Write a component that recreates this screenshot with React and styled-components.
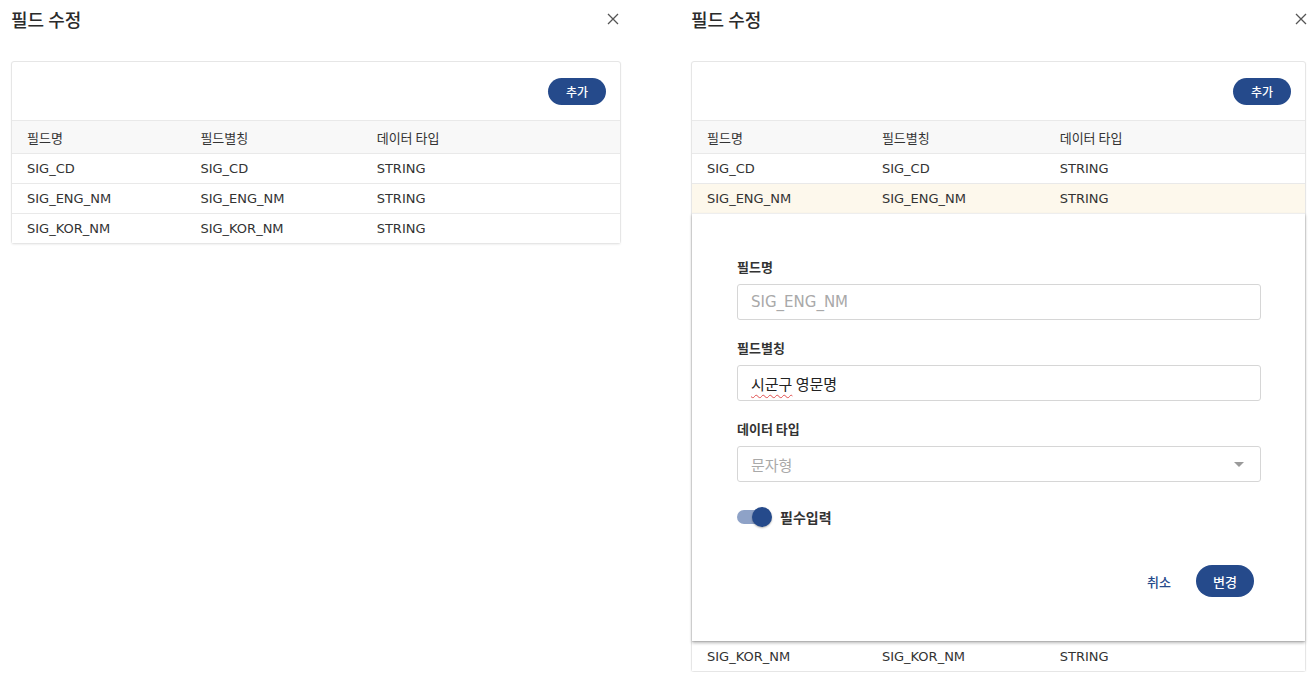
import React from 'react';
import styled, { createGlobalStyle } from 'styled-components';

const GlobalStyle = createGlobalStyle`
  html, body {
    margin: 0;
    padding: 0;
    background: #ffffff;
  }
  body {
    font-family: "DejaVu Sans", "Noto Sans CJK KR", sans-serif;
    color: #333333;
  }
`;

const PRIMARY = '#254a8b';
const KR = '"Noto Sans CJK KR", "DejaVu Sans", sans-serif';
const LATIN = '"DejaVu Sans", "Noto Sans CJK KR", sans-serif';

const rows = [
  { name: 'SIG_CD', alias: 'SIG_CD', type: 'STRING' },
  { name: 'SIG_ENG_NM', alias: 'SIG_ENG_NM', type: 'STRING' },
  { name: 'SIG_KOR_NM', alias: 'SIG_KOR_NM', type: 'STRING' },
];

const Page = styled.div`
  display: flex;
  column-gap: 70px;
  padding-left: 11px;
`;

const Dialog = styled.section`
  width: ${(props) => props.$width}px;
  display: flex;
  flex-direction: column;
`;

const DialogHeader = styled.header`
  display: flex;
  align-items: center;
  justify-content: space-between;
  height: 37px;
  margin-bottom: 24px;
`;

const Title = styled.h2`
  margin: 0;
  font-family: ${KR};
  font-size: 18px;
  font-weight: 500;
  color: #2b2b2b;
`;

const CloseButton = styled.button`
  border: none;
  background: none;
  padding: 0;
  margin-right: ${(props) => props.$offset}px;
  width: 14px;
  height: 14px;
  display: flex;
  align-items: center;
  justify-content: center;
  color: #555;
  cursor: pointer;
`;

const Card = styled.div`
  border: 1px solid #e6e6e6;
  border-radius: 3px;
  box-shadow: 0 1px 2px rgba(0, 0, 0, 0.06);
  background: #fff;
`;

const Toolbar = styled.div`
  height: 58px;
  display: flex;
  align-items: center;
  justify-content: flex-end;
  padding-right: 14px;
`;

const PillButton = styled.button`
  border: none;
  border-radius: 16px;
  background: ${PRIMARY};
  color: #fff;
  font-family: ${KR};
  font-size: ${(props) => (props.$large ? 13 : 12)}px;
  font-weight: 500;
  width: 58px;
  height: ${(props) => (props.$large ? 32 : 27)}px;
  cursor: pointer;
  padding: 0;
`;

const Row = styled.div`
  display: grid;
  grid-template-columns: 30% 30.5% 1fr;
  align-items: center;
  height: ${(props) => (props.$header ? 32 : 29)}px;
  padding: 0 15px;
  border-top: 1px solid #e9e9e9;
  background: ${(props) =>
    props.$header ? '#f8f8f8' : props.$selected ? '#fdf8ec' : '#fff'};
  font-family: ${(props) => (props.$header ? KR : LATIN)};
  font-size: 13px;
  color: #333;
`;

const EditPanel = styled.div`
  position: relative;
  z-index: 1;
  background: #fff;
  padding: 44px 44px 44px 45px;
  box-shadow: 0 2px 3px rgba(0, 0, 0, 0.28);
  border-top: 1px solid #eeeeee;
`;

const Field = styled.div`
  display: flex;
  flex-direction: column;
  row-gap: 8px;
  margin-bottom: 19px;
`;

const Label = styled.label`
  font-family: ${KR};
  font-size: 13px;
  font-weight: 600;
  line-height: 18px;
  color: #333;
`;

const TextBox = styled.div`
  box-sizing: border-box;
  height: 36px;
  border: 1px solid #d6d6d6;
  border-radius: 3px;
  display: flex;
  align-items: center;
  justify-content: space-between;
  padding: 0 16px 0 13px;
  font-family: ${(props) => (props.$korean ? KR : LATIN)};
  font-size: 15px;
  color: ${(props) => (props.$muted ? '#a9a9a9' : '#222')};
`;

const Misspelled = styled.span`
  text-decoration: underline wavy #e05050;
  text-decoration-thickness: 1px;
  text-underline-offset: 4px;
`;

const Caret = styled.span`
  width: 0;
  height: 0;
  border-left: 5px solid transparent;
  border-right: 5px solid transparent;
  border-top: 5px solid #9a9a9a;
`;

const SwitchRow = styled.div`
  display: flex;
  align-items: center;
  column-gap: 9px;
  margin-top: 23px;
  height: 24px;
`;

const Track = styled.span`
  position: relative;
  width: 34px;
  height: 14px;
  border-radius: 7px;
  background: #8ea2c7;
`;

const Thumb = styled.span`
  position: absolute;
  right: -1px;
  top: -3px;
  width: 20px;
  height: 20px;
  border-radius: 50%;
  background: ${PRIMARY};
  box-shadow: 0 1px 2px rgba(0, 0, 0, 0.3);
`;

const SwitchText = styled.span`
  font-family: ${KR};
  font-size: 14px;
  font-weight: 700;
  color: #333;
`;

const Actions = styled.div`
  display: flex;
  justify-content: flex-end;
  align-items: center;
  column-gap: 25px;
  margin-top: 36px;
  padding-right: 7px;
`;

const TextButton = styled.button`
  border: none;
  background: none;
  padding: 0;
  font-family: ${KR};
  font-size: 13px;
  font-weight: 500;
  color: ${PRIMARY};
  cursor: pointer;
`;

const CloseIcon = () => (
  <svg width="12" height="12" viewBox="0 0 12 12">
    <path d="M1 1 L11 11 M11 1 L1 11" stroke="currentColor" strokeWidth="1.3" />
  </svg>
);

const HeaderRow = () => (
  <Row $header>
    <span>필드명</span>
    <span>필드별칭</span>
    <span>데이터 타입</span>
  </Row>
);

const DataRow = ({ row, selected }) => (
  <Row $selected={selected}>
    <span>{row.name}</span>
    <span>{row.alias}</span>
    <span>{row.type}</span>
  </Row>
);

const EditForm = () => (
  <EditPanel>
    <Field>
      <Label>필드명</Label>
      <TextBox $muted>SIG_ENG_NM</TextBox>
    </Field>
    <Field>
      <Label>필드별칭</Label>
      <TextBox $korean>
        <span>
          <Misspelled>시군구</Misspelled> 영문명
        </span>
      </TextBox>
    </Field>
    <Field>
      <Label>데이터 타입</Label>
      <TextBox $korean $muted>
        <span>문자형</span>
        <Caret />
      </TextBox>
    </Field>
    <SwitchRow>
      <Track>
        <Thumb />
      </Track>
      <SwitchText>필수입력</SwitchText>
    </SwitchRow>
    <Actions>
      <TextButton>취소</TextButton>
      <PillButton $large>변경</PillButton>
    </Actions>
  </EditPanel>
);

const App = () => (
  <>
    <GlobalStyle />
    <Page>
      <Dialog $width={610}>
        <DialogHeader>
          <Title>필드 수정</Title>
          <CloseButton $offset={1}>
            <CloseIcon />
          </CloseButton>
        </DialogHeader>
        <Card>
          <Toolbar>
            <PillButton>추가</PillButton>
          </Toolbar>
          <HeaderRow />
          {rows.map((row) => (
            <DataRow key={row.name} row={row} />
          ))}
        </Card>
      </Dialog>
      <Dialog $width={615}>
        <DialogHeader>
          <Title>필드 수정</Title>
          <CloseButton $offset={-2}>
            <CloseIcon />
          </CloseButton>
        </DialogHeader>
        <Card>
          <Toolbar>
            <PillButton>추가</PillButton>
          </Toolbar>
          <HeaderRow />
          <DataRow row={rows[0]} />
          <DataRow row={rows[1]} selected />
          <EditForm />
          <DataRow row={rows[2]} />
        </Card>
      </Dialog>
    </Page>
  </>
);

export default App;
